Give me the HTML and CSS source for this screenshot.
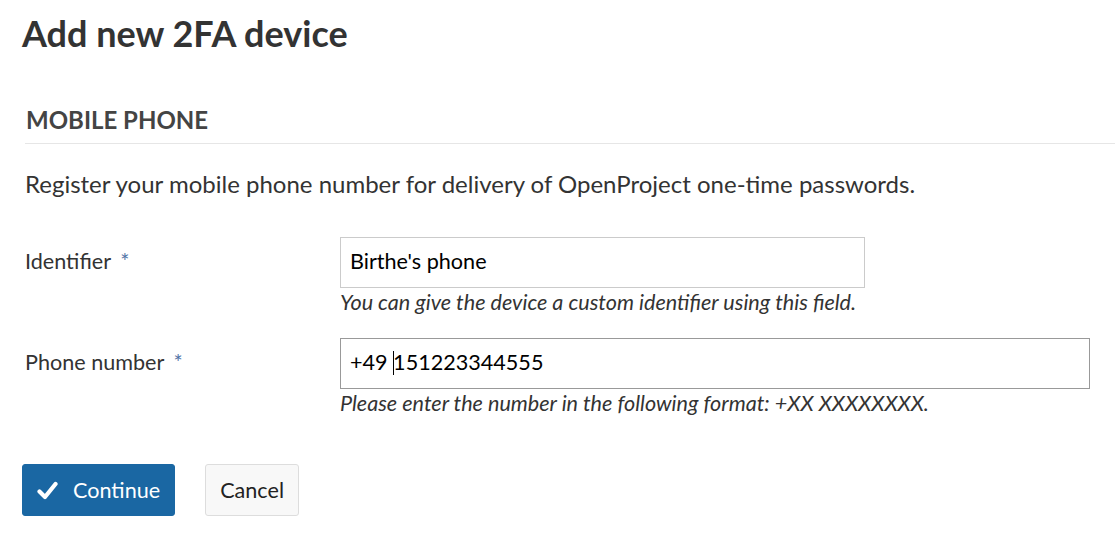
FILE: index.html
```html
<!DOCTYPE html>
<html lang="en">
<head>
<meta charset="utf-8">
<title>Add new 2FA device</title>
<link rel="stylesheet" href="styles.css">
</head>
<body>
<main class="page">
  <h1 class="title">Add new 2FA device</h1>
  <form class="form">
    <section class="form-section">
      <h2 class="section-title">MOBILE PHONE</h2>
      <p class="intro">Register your mobile phone number for delivery of OpenProject one-time passwords.</p>
      <div class="field">
        <label class="field-label" for="identifier">Identifier <span class="req">*</span></label>
        <div class="field-body">
          <div class="input short"><span class="value">Birthe's phone</span></div>
          <div class="help">You can give the device a custom identifier using this field.</div>
        </div>
      </div>
      <div class="field field-next">
        <label class="field-label" for="phone">Phone number <span class="req">*</span></label>
        <div class="field-body">
          <div class="input focused"><span class="value">+49 <span class="caret"></span>151223344555</span></div>
          <div class="help">Please enter the number in the following format: +XX XXXXXXXX.</div>
        </div>
      </div>
    </section>
    <div class="actions">
      <button type="button" class="btn btn-primary">
        <svg class="check" width="21" height="19" viewBox="0 0 21 19" aria-hidden="true"><path d="M2.5 10.5 L8 16 L18.5 3" fill="none" stroke="#fff" stroke-width="4.2" stroke-linecap="round" stroke-linejoin="round"/></svg>
        <span>Continue</span>
      </button>
      <button type="button" class="btn btn-default">Cancel</button>
    </div>
  </form>
</main>
</body>
</html>
```

FILE: styles.css
```css
* { box-sizing: border-box; }
html, body { margin: 0; padding: 0; background: #fff; }
body {
  font-family: Lato, "Open Sans", sans-serif;
  color: #333;
}
.page {
  padding: 12px 25px 0 22px;
}
.title {
  margin: 0;
  font-size: 36px;
  line-height: 43px;
  font-weight: 700;
  color: #333;
}
.form { margin: 0; }
.form-section {
  padding-left: 3px;
}
.section-title {
  margin: 50px -25px 0 0;
  font-size: 24px;
  line-height: 29px;
  font-weight: 700;
  color: #444;
  padding: 0 0 9px 1px;
  border-bottom: 1px solid #e6e6e6;
}
.intro {
  margin: 25px 0 0 0;
  font-size: 24px;
  line-height: 29px;
}
.field {
  display: grid;
  grid-template-columns: 315px 1fr;
  margin-top: 39px;
}
.field-next { margin-top: 23px; }
.field-label {
  font-size: 21.6px;
  line-height: 26px;
  padding-top: 11px;
}
.req {
  color: #4f72a6;
  margin-left: 4px;
}
.input {
  height: 51px;
  border: 1px solid #cbcbcb;
  padding: 10px 9px 0 9px;
  font-size: 21.6px;
  line-height: 26px;
  color: #000;
  background: #fff;
}
.input.short { width: 70%; }
.input.focused { border-color: #999; }
.caret {
  display: inline-block;
  width: 1px;
  height: 24px;
  margin-right: -1px;
  background: #000;
  vertical-align: -5px;
}
.help {
  font-size: 21.6px;
  line-height: 26px;
  font-style: italic;
  color: #333;
  margin-top: 1px;
}
.actions {
  display: flex;
  gap: 30px;
  margin-top: 48px;
}
.btn {
  height: 52px;
  font-family: inherit;
  font-size: 21.6px;
  border-radius: 3px;
  display: inline-flex;
  align-items: center;
  cursor: pointer;
}
.btn-primary {
  background: #1a67a3;
  border: 1px solid #1a67a3;
  color: #fff;
  padding: 0 14px;
  gap: 15px;
}
.btn-default {
  background: #f8f8f8;
  border: 1px solid #dddddd;
  color: #222;
  padding: 0 14px;
}
.check { display: block; }
```
